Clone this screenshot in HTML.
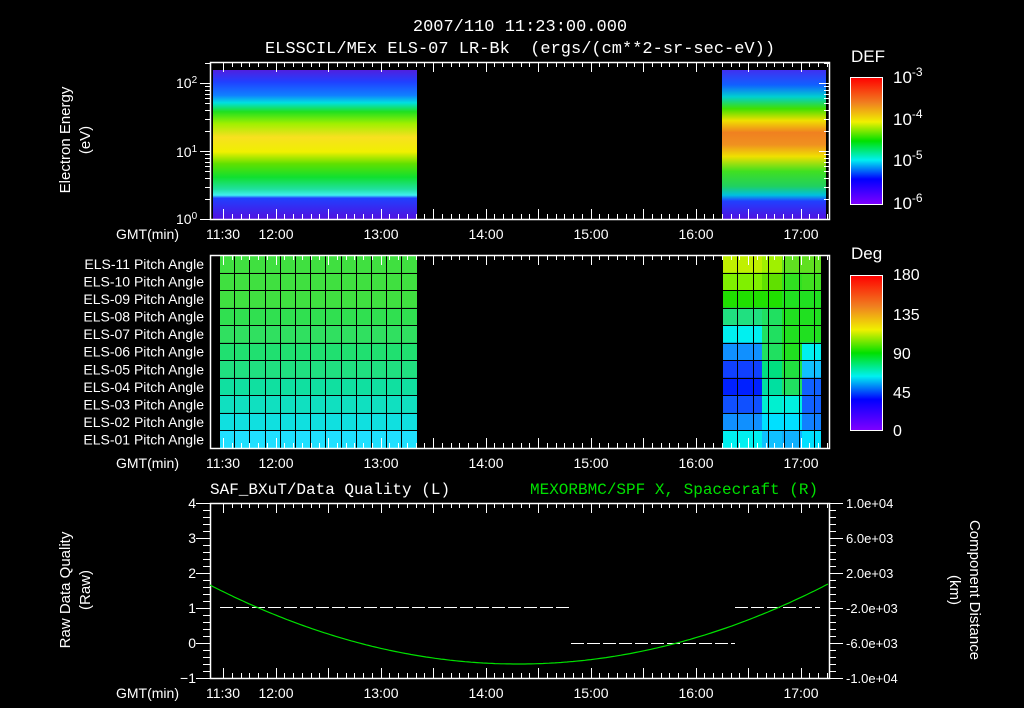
<!DOCTYPE html>
<html><head><meta charset="utf-8"><style>
html,body{margin:0;padding:0;background:#000;width:1024px;height:708px;overflow:hidden}
svg{display:block}
text{font-family:"Liberation Sans",sans-serif;fill:#fff}
.m{font-family:"Liberation Mono",monospace}
</style></head><body>
<svg id="s" width="1024" height="708" font-size="14" xmlns="http://www.w3.org/2000/svg">
<defs>
<linearGradient id="specL" x1="0" y1="0" x2="0" y2="1">
<stop offset="0" stop-color="#5020e0"/><stop offset="0.08" stop-color="#2040ff"/>
<stop offset="0.17" stop-color="#1080ff"/><stop offset="0.22" stop-color="#00e0e0"/>
<stop offset="0.28" stop-color="#20e020"/><stop offset="0.36" stop-color="#a0f000"/>
<stop offset="0.45" stop-color="#f8e020"/><stop offset="0.55" stop-color="#f0f000"/>
<stop offset="0.63" stop-color="#60e000"/><stop offset="0.72" stop-color="#10e030"/>
<stop offset="0.8" stop-color="#20e0a0"/><stop offset="0.84" stop-color="#40f0f0"/>
<stop offset="0.86" stop-color="#2040ff"/><stop offset="1" stop-color="#5010e0"/>
</linearGradient>
<linearGradient id="specR" x1="0" y1="0" x2="0" y2="1">
<stop offset="0" stop-color="#4030f0"/><stop offset="0.1" stop-color="#1060ff"/>
<stop offset="0.18" stop-color="#00d0d0"/><stop offset="0.26" stop-color="#40e000"/>
<stop offset="0.34" stop-color="#f0e000"/><stop offset="0.42" stop-color="#f08020"/>
<stop offset="0.5" stop-color="#f09020"/><stop offset="0.58" stop-color="#f0e000"/>
<stop offset="0.68" stop-color="#40e020"/><stop offset="0.78" stop-color="#20d060"/>
<stop offset="0.84" stop-color="#00c0e0"/><stop offset="0.88" stop-color="#2040ff"/>
<stop offset="1" stop-color="#5010e0"/>
</linearGradient>
<linearGradient id="cb" x1="0" y1="0" x2="0" y2="1">
<stop offset="0" stop-color="#ff0000"/><stop offset="0.2" stop-color="#f08020"/>
<stop offset="0.35" stop-color="#f0f000"/><stop offset="0.5" stop-color="#00e000"/>
<stop offset="0.65" stop-color="#00f0f0"/><stop offset="0.8" stop-color="#0000ff"/>
<stop offset="1" stop-color="#8000ff"/>
</linearGradient>
</defs>
<text class="m" x="520" y="31" text-anchor="middle" font-size="17">2007/110 11:23:00.000</text>
<text class="m" x="520" y="53" text-anchor="middle" font-size="17" xml:space="preserve">ELSSCIL/MEx ELS-07 LR-Bk  (ergs/(cm**2-sr-sec-eV))</text>
<rect x="213" y="70" width="204" height="149" fill="url(#specL)"/>
<rect x="722" y="70" width="104" height="149" fill="url(#specR)"/>
<g id="g"></g>
<rect x="850.5" y="77.5" width="32" height="127" fill="url(#cb)" stroke="#fff"/>
<rect x="850.5" y="275.5" width="32" height="155" fill="url(#cb)" stroke="#fff"/>
<text x="851" y="62" font-size="17">DEF</text>
<text x="851" y="259" font-size="17">Deg</text>
<text x="893" y="83" font-size="17">10<tspan dy="-7" font-size="12">-3</tspan></text>
<text x="893" y="125" font-size="17">10<tspan dy="-7" font-size="12">-4</tspan></text>
<text x="893" y="166" font-size="17">10<tspan dy="-7" font-size="12">-5</tspan></text>
<text x="893" y="209" font-size="17">10<tspan dy="-7" font-size="12">-6</tspan></text>
<text x="893" y="280" font-size="16">180</text>
<text x="893" y="320" font-size="16">135</text>
<text x="893" y="359" font-size="16">90</text>
<text x="893" y="398" font-size="16">45</text>
<text x="893" y="436" font-size="16">0</text>
<text x="176" y="88" font-size="14">10<tspan dy="-5" font-size="10">2</tspan></text>
<text x="176" y="157" font-size="14">10<tspan dy="-5" font-size="10">1</tspan></text>
<text x="176" y="224" font-size="14">10<tspan dy="-5" font-size="10">0</tspan></text>
<text transform="translate(70,140) rotate(-90)" text-anchor="middle" font-size="15">Electron Energy</text>
<text transform="translate(90,140) rotate(-90)" text-anchor="middle" font-size="15">(eV)</text>
<text transform="translate(70,590) rotate(-90)" text-anchor="middle" font-size="15">Raw Data Quality</text>
<text transform="translate(90,590) rotate(-90)" text-anchor="middle" font-size="15">(Raw)</text>
<text transform="translate(970,590) rotate(90)" text-anchor="middle" font-size="15">Component Distance</text>
<text transform="translate(950,590) rotate(90)" text-anchor="middle" font-size="15">(km)</text>
<text class="m" x="210" y="494" font-size="16">SAF_BXuT/Data Quality (L)</text>
<text class="m" x="530" y="494" font-size="16" style="fill:#00e000">MEXORBMC/SPF X, Spacecraft (R)</text>
</svg>
<script>
(function(){
var g=document.getElementById('g'),ns='http://www.w3.org/2000/svg';
function el(t,a,txt){var e=document.createElementNS(ns,t);for(var k in a)e.setAttribute(k,a[k]);if(txt)e.textContent=txt;g.appendChild(e);return e;}
function line(x1,y1,x2,y2,c,w){el('line',{x1:x1,y1:y1,x2:x2,y2:y2,stroke:c||'#fff','stroke-width':w||1});}
var L=['#40e040','#40e040','#40e040','#30e050','#30e060','#20e070','#20e080','#10e0a0','#10e0c0','#10e0e0','#20e0ff'];
var R=[['#c0f000','#c0f000','#a0f000','#60e020','#60e020'],['#80f000','#80f000','#60e000','#30e020','#40e020'],['#20e000','#20e000','#20e000','#20e020','#20e020'],['#20e080','#20e080','#20e060','#20e020','#20e020'],['#00f0f0','#00f0f0','#20e060','#20e020','#20e020'],['#1090ff','#1090ff','#20e060','#20e020','#00f0f0'],['#1040ff','#1040ff','#00e080','#20e040','#10c0ff'],['#0020ff','#0020ff','#00e0a0','#20e060','#1060ff'],['#1050ff','#1050ff','#00f0d0','#00f0e0','#1060ff'],['#1090ff','#1090ff','#00e0ff','#00e0ff','#1080ff'],['#00f0f0','#00f0f0','#10c0ff','#10b0ff','#00e0ff']];
var T0=255,rh=193/11;
for(var i=0;i<11;i++){var y=T0+i*rh;
el('rect',{x:219,y:y,width:198,height:rh,fill:L[i]});
for(var j=0;j<5;j++)el('rect',{x:722+j*20,y:y,width:j==4?19:20,height:rh,fill:R[i][j]});}
for(var i=0;i<=11;i++){var y=Math.round(T0+i*rh)+0.5;line(219,y,417,y,'#000',1);line(722,y,821,y,'#000',1);}
for(var x=219;x<=418;x+=15.2){var xx=Math.round(x)+0.5;line(xx,T0,xx,448,'#000',1);}
for(var x=722;x<=822;x+=15.4){var xx=Math.round(x)+0.5;line(xx,T0,xx,448,'#000',1);}
var names=['ELS-11','ELS-10','ELS-09','ELS-08','ELS-07','ELS-06','ELS-05','ELS-04','ELS-03','ELS-02','ELS-01'];
for(var i=0;i<11;i++)el('text',{x:204,y:T0+i*rh+14,'text-anchor':'end','font-size':'14'},names[i]+' Pitch Angle');
function frame(y1,y2){el('rect',{x:210.5,y:y1+0.5,width:619,height:y2-y1,fill:'none',stroke:'#fff','stroke-width':1.5});
for(var k=0;k<=70;k++){var x=Math.round(223+k*8.75)+0.5;if(x>828)break;var len=(k%6==0)?10:5;
line(x,y1,x,y1+len);line(x,y2,x,y2-len);}
var T=[['11:30',223],['12:00',276],['13:00',381],['14:00',486],['15:00',591],['16:00',696],['17:00',801]];
T.forEach(function(t){el('text',{x:t[1],y:y2+20,'text-anchor':'middle','font-size':'14'},t[0]);});
el('text',{x:116,y:y2+20,'font-size':'14'},'GMT(min)');}
frame(62,219);frame(255,448);frame(503,678);
for(var d=0;d<3;d++)for(var m=1;m<10;m++){var y=Math.round(219-(d+Math.log10(m))*68)+0.5;if(y<63)break;line(829,y,m==1?819:824,y);line(210,y,m==1?200:205,y);}
for(var k=0;k<=25;k++){var y=678-k*7+0.5;line(210,y,k%5==0?196:203,y);}
for(var v=-1;v<=4;v++)el('text',{x:196,y:678-(v+1)*35+5,'text-anchor':'end','font-size':'14'},v<0?'\u2212'+(-v):''+v);
var RL=['1.0e+04','6.0e+03','2.0e+03','-2.0e+03','-6.0e+03','-1.0e+04'];
for(var k=0;k<=25;k++){var y=503+k*7+0.5;line(829,y,k%5==0?843:836,y);}
RL.forEach(function(t,i){el('text',{x:846,y:508+i*35,'font-size':'13'},t);});
function dash(x1,x2,y){for(var x=x1;x<x2;x+=16)line(x,y+0.5,Math.min(x+13,x2),y+0.5);}
dash(220,571,607);dash(571,735,643);dash(735,820,607);
var p='';for(var x=210;x<=829;x+=3){var t=(x-518)/310;var y=664-80*t*t;p+=(p?'L':'M')+x+' '+y.toFixed(1);}
el('path',{d:p,fill:'none',stroke:'#00e000','stroke-width':1.2});
})();
</script>
</body></html>
